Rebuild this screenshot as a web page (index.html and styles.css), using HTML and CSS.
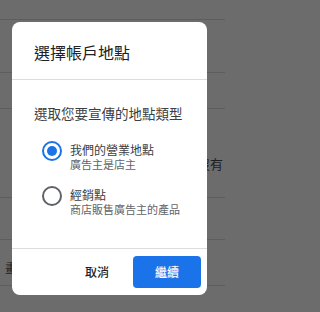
FILE: index.html
```html
<!DOCTYPE html>
<html lang="zh-Hant">
<head>
<meta charset="utf-8">
<link rel="stylesheet" href="styles.css">
</head>
<body>
<div class="page">
  <div class="row r0"></div>
  <div class="row r1"></div>
  <div class="row r2"></div>
  <div class="row r3"><span class="bgtext right">您沒有</span></div>
  <div class="row r4"></div>
  <div class="row r5"><span class="bgtext left">畫面</span></div>
  <div class="row r6"></div>
</div>
<div class="dialog">
  <div class="header"><h1 class="title">選擇帳戶地點</h1></div>
  <div class="body">
    <div class="subhead">選取您要宣傳的地點類型</div>
    <div class="options">
      <label class="option">
        <span class="radio checked"><span class="dot"></span></span>
        <span class="otext">
          <span class="oname">我們的營業地點</span>
          <span class="odesc">廣告主是店主</span>
        </span>
      </label>
      <label class="option">
        <span class="radio"></span>
        <span class="otext">
          <span class="oname">經銷點</span>
          <span class="odesc">商店販售廣告主的產品</span>
        </span>
      </label>
    </div>
  </div>
  <div class="footer">
    <button class="btn text">取消</button>
    <button class="btn primary">繼續</button>
  </div>
</div>
</body>
</html>
```

FILE: styles.css
```css
* { box-sizing: border-box; }
html, body { margin: 0; padding: 0; background: #6c6c6c; }
body {
  width: 225px;
  height: 312px;
  overflow: hidden;
  font-family: "Noto Sans CJK TC", "Noto Sans", sans-serif;
  position: relative;
}
.page { display: flex; flex-direction: column; }
.row { border-bottom: 1px solid #5d5d5d; display: flex; }
.r0 { height: 20px; }
.r1 { height: 53px; }
.r2 { height: 36px; }
.r3 { height: 89px; justify-content: flex-end; }
.r4 { height: 42px; }
.r5 { height: 46px; }
.r6 { height: 30px; border-bottom: none; }
.bgtext { font-size: 13px; line-height: 16px; color: #1e1e1f; white-space: nowrap; }
.bgtext.right { padding-top: 47px; padding-right: 2px; }
.bgtext.left { padding-top: 20px; padding-left: 5px; font-size: 12px; }

.dialog {
  position: absolute;
  left: 12px;
  top: 22px;
  width: 195px;
  height: 273px;
  background: #fff;
  border-radius: 8px;
  display: flex;
  flex-direction: column;
  overflow: hidden;
}
.header { padding: 18px 22px 15px; border-bottom: 1px solid #dadce0; }
.title { margin: 0; font-size: 16px; line-height: 24px; font-weight: 400; color: #202124; white-space: nowrap; }
.body { flex: 1; padding: 23px 0 0 22px; border-bottom: 1px solid #dadce0; }
.subhead { font-size: 13.5px; line-height: 20px; color: #3c4043; white-space: nowrap; }
.options { display: flex; flex-direction: column; gap: 17px; margin-top: 20px; padding-left: 8px; }
.option { display: flex; align-items: flex-start; gap: 8px; }
.radio {
  width: 20px; height: 20px; border-radius: 50%;
  border: 2px solid #5f6368;
  margin-top: -2px;
  display: flex; align-items: center; justify-content: center;
  flex: none;
}
.radio.checked { border-color: #1a73e8; }
.dot { width: 10px; height: 10px; border-radius: 50%; background: #1a73e8; }
.otext { display: flex; flex-direction: column; white-space: nowrap; }
.oname { font-size: 12px; line-height: 14px; color: #3c4043; }
.odesc { font-size: 11px; line-height: 14px; color: #5f6368; }
.footer { display: flex; justify-content: flex-end; gap: 2px; padding: 7px 6px 7px; }
.btn {
  width: 68px; height: 32px; border: none; border-radius: 4px;
  font-family: inherit; font-size: 12px; line-height: 16px; padding: 0;
  font-weight: 500;
  background: transparent; color: #202124;
}
.btn.primary { background: #1a73e8; color: #fff; }
```
